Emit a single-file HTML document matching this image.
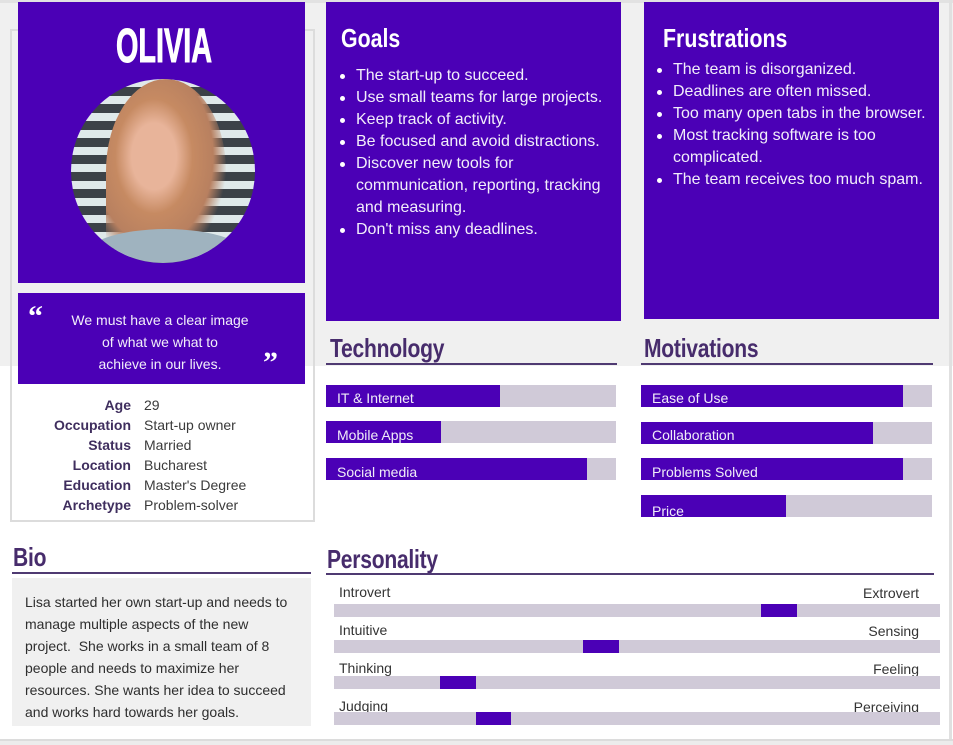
<!DOCTYPE html>
<html><head><meta charset="utf-8"><style>
*{margin:0;padding:0;box-sizing:border-box}
body{width:953px;height:745px;position:relative;overflow:hidden;background:#fff;font-family:"Liberation Sans",sans-serif;}
.a{position:absolute}
.p{background:#4b00b6;color:#fff}
.h{font-weight:bold;font-size:26px;color:#472c6c;transform:scaleX(0.81);transform-origin:0 0;letter-spacing:-0.3px;white-space:nowrap}
.wt{color:#fff;font-weight:bold;font-size:26px;transform:scaleX(0.82);transform-origin:0 0;white-space:nowrap}
.ul{height:2px;background:#4f3a72}
ul{list-style:none}
li{position:relative;padding-left:30px;font-size:16px;line-height:22px;color:#f2eefa}
li:before{content:"";position:absolute;left:14px;top:9px;width:5px;height:5px;border-radius:50%;background:#fff}
.bar{background:#d0cad8;height:22px}
.bar div{background:#4b00b6;height:22px;color:#f0ecf8;padding:5px 0 0 11px;font-size:14px;white-space:nowrap}
.lab{font-size:14px;color:#333}
.pb{background:#d0cad8;height:13px;left:334px;width:606px}
.pb div{position:absolute;top:0;height:13px;width:36px;background:#4b00b6}
.dl{font-size:14px;line-height:20px;color:#3a3a3a}
.dl b{display:inline-block;width:131px;text-align:right;color:#3f2e5e;margin-right:13px}
</style></head><body>
<div class="a" style="left:0;top:0;width:953px;height:366px;background:#f0f0f0"></div>
<div class="a" style="left:0;top:0;width:953px;height:3px;background:#e2e2e2"></div>
<div class="a" style="left:10px;top:29px;width:305px;height:493px;border:2px solid #dcdcdc"></div>
<div class="a p" style="left:18px;top:2px;width:287px;height:281px"></div>
<div class="a" style="left:116px;top:22px;color:#fff;font-weight:900;font-size:48px;line-height:50px;transform:scaleX(0.6);transform-origin:0 0;white-space:nowrap;-webkit-text-stroke:1px #fff">OLIVIA</div>
<div class="a" style="left:71px;top:79px;width:184px;height:184px;border-radius:50%;overflow:hidden;background:repeating-linear-gradient(180deg,#dfe9ea 0 8px,#3c4248 8px 17px)">
 <div class="a" style="left:35px;top:0;width:120px;height:184px;border-radius:50% 50% 10% 10%;background:radial-gradient(ellipse at 40% 42%,#e8b49a 0 22%,#c68a62 38%,#b88060 58%,transparent 72%)"></div>
 <div class="a" style="left:10px;top:150px;width:170px;height:60px;border-radius:50% 50% 0 0;background:#9fb3bf"></div>
</div>
<div class="a p" style="left:18px;top:293px;width:287px;height:91px"></div>
<div class="a" style="left:28px;top:300px;color:#fff;font-family:'Liberation Serif',serif;font-weight:bold;font-size:30px">“</div>
<div class="a" style="left:263px;top:346px;color:#fff;font-family:'Liberation Serif',serif;font-weight:bold;font-size:30px">”</div>
<div class="a" style="left:60px;top:309px;width:200px;text-align:center;color:#f2eefa;font-size:14px;line-height:22px">We must have a clear image<br>of what we what to<br>achieve in our lives.</div>
<div class="a dl" style="left:0;top:395px">
<div><b>Age</b>29</div><div><b>Occupation</b>Start-up owner</div><div><b>Status</b>Married</div><div><b>Location</b>Bucharest</div><div><b>Education</b>Master's Degree</div><div><b>Archetype</b>Problem-solver</div></div>

<div class="a p" style="left:326px;top:2px;width:295px;height:319px"></div>
<div class="a wt" style="left:341px;top:23px">Goals</div>
<ul class="a" style="left:326px;top:65px;width:295px">
<li>The start-up to succeed.</li><li>Use small teams for large projects.</li><li>Keep track of activity.</li><li>Be focused and avoid distractions.</li><li>Discover new tools for<br>communication, reporting, tracking and measuring.</li><li>Don't miss any deadlines.</li></ul>

<div class="a p" style="left:644px;top:2px;width:295px;height:317px"></div>
<div class="a wt" style="left:663px;top:23px">Frustrations</div>
<ul class="a" style="left:643px;top:59px;width:296px">
<li>The team is disorganized.</li><li>Deadlines are often missed.</li><li>Too many open tabs in the browser.</li><li>Most tracking software is too complicated.</li><li>The team receives too much spam.</li></ul>

<div class="a h" style="left:330px;top:333px">Technology</div>
<div class="a ul" style="left:326px;top:363px;width:291px"></div>
<div class="a h" style="left:644px;top:333px">Motivations</div>
<div class="a ul" style="left:641px;top:363px;width:292px"></div>

<div class="a bar" style="left:326px;top:385px;width:290px"><div style="width:174px">IT &amp; Internet</div></div>
<div class="a bar" style="left:326px;top:421px;width:290px"><div style="width:115px;padding-top:6px">Mobile Apps</div></div>
<div class="a bar" style="left:326px;top:458px;width:290px"><div style="width:261px;padding-top:6px">Social media</div></div>
<div class="a bar" style="left:641px;top:385px;width:291px"><div style="width:262px">Ease of Use</div></div>
<div class="a bar" style="left:641px;top:422px;width:291px"><div style="width:232px">Collaboration</div></div>
<div class="a bar" style="left:641px;top:458px;width:291px"><div style="width:262px;padding-top:6px">Problems Solved</div></div>
<div class="a bar" style="left:641px;top:495px;width:291px"><div style="width:145px;padding-top:8px">Price</div></div>

<div class="a h" style="left:13px;top:542px">Bio</div>
<div class="a ul" style="left:12px;top:572px;width:299px"></div>
<div class="a" style="left:12px;top:578px;width:299px;height:148px;background:#f0f0f0"></div>
<div class="a" style="left:25px;top:591px;width:276px;font-size:14px;line-height:22px;color:#2e2e2e">Lisa started her own start-up and needs to manage multiple aspects of the new project.&nbsp; She works in a small team of 8 people and needs to maximize her resources. She wants her idea to succeed and works hard towards her goals.</div>

<div class="a h" style="left:327px;top:544px">Personality</div>
<div class="a ul" style="left:326px;top:573px;width:608px"></div>
<div class="a lab" style="left:339px;top:584px">Introvert</div><div class="a lab" style="right:34px;top:585px">Extrovert</div>
<div class="a pb" style="top:604px"><div style="left:427px"></div></div>
<div class="a lab" style="left:339px;top:622px">Intuitive</div><div class="a lab" style="right:34px;top:623px">Sensing</div>
<div class="a pb" style="top:640px"><div style="left:249px"></div></div>
<div class="a lab" style="left:339px;top:660px">Thinking</div><div class="a lab" style="right:34px;top:661px">Feeling</div>
<div class="a pb" style="top:676px"><div style="left:106px"></div></div>
<div class="a lab" style="left:339px;top:698px">Judging</div><div class="a lab" style="right:34px;top:699px">Perceiving</div>
<div class="a pb" style="top:712px"><div style="left:142px;width:35px"></div></div>

<div class="a" style="left:949px;top:0;width:3px;height:745px;background:#e0e0e0"></div>
<div class="a" style="left:0;top:739px;width:953px;height:6px;background:#ececec;border-top:2px solid #dcdcdc"></div>
</body></html>
